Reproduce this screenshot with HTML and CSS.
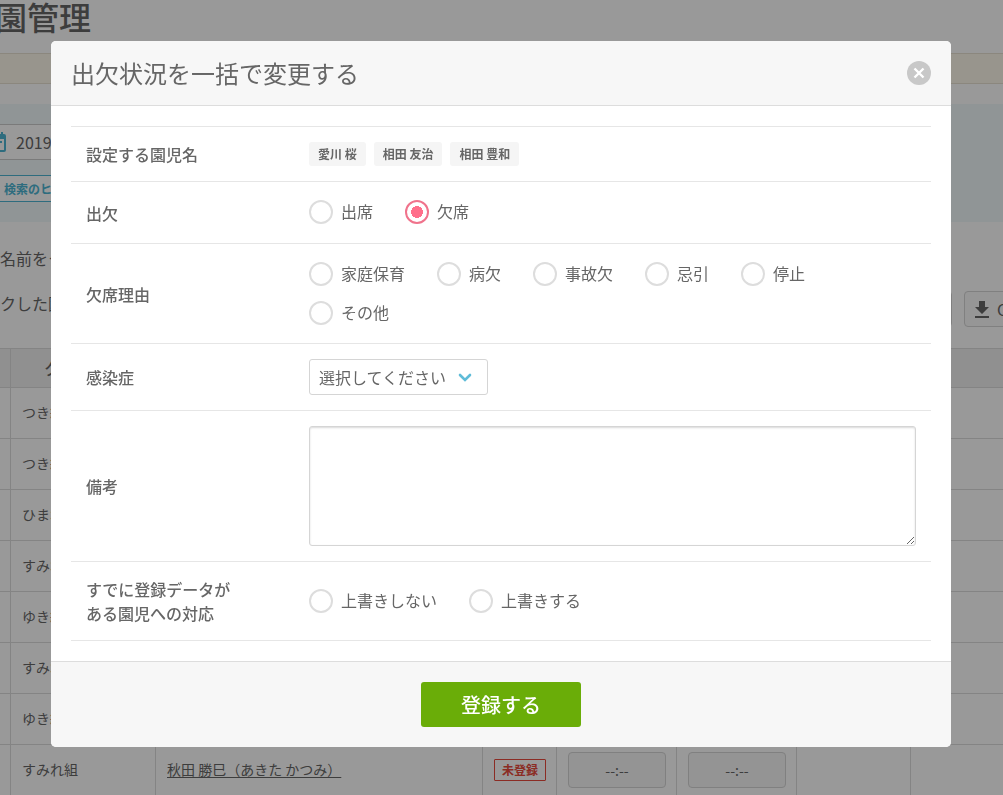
FILE: index.html
```html
<!DOCTYPE html>
<html lang="ja">
<head>
<meta charset="utf-8">
<meta name="viewport" content="width=device-width, initial-scale=1">
<title>出欠状況を一括で変更する</title>
<link rel="stylesheet" href="styles.css">
</head>
<body>
<main class="page">
  <h1 class="page-title">園管理</h1>
  <div class="notice"></div>
  <section class="search">
    <div class="date-field">
      <svg class="calendar" viewBox="0 0 18 20" aria-hidden="true"><path fill-rule="evenodd" d="M16 2h-1V0h-2v2H5V0H3v2H2a2 2 0 0 0-2 2v14a2 2 0 0 0 2 2h14a2 2 0 0 0 2-2V4a2 2 0 0 0-2-2zm0 16H2V7h14zM4 9h10v2H4z"/></svg>
      <span>2019</span>
    </div>
    <button class="hint" type="button">検索のヒント</button>
  </section>
  <p class="lead">名前をク</p>
  <div class="tools">
    <p class="tools-text">クした園児</p>
    <button class="tool" type="button" aria-label="操作"></button>
    <button class="tool tool-download" type="button">
      <svg class="download" viewBox="0 0 14 17" aria-hidden="true"><path d="M4 0h6v6h4l-7 7-7-7h4zM0 15h14v2H0z"/></svg>
      <span>CSV</span>
    </button>
  </div>
  <table class="list">
    <colgroup><col class="c-check"><col class="c-class"><col class="c-name"><col class="c-state"><col class="c-time"><col class="c-time"><col class="c-note"><col></colgroup>
    <thead><tr><th></th><th>クラス</th><th></th><th></th><th></th><th></th><th></th><th></th></tr></thead>
    <tbody>
      <tr><td></td><td>つき組</td><td></td><td></td><td></td><td></td><td></td><td></td></tr>
      <tr><td></td><td>つき組</td><td></td><td></td><td></td><td></td><td></td><td></td></tr>
      <tr><td></td><td>ひまわり組</td><td></td><td></td><td></td><td></td><td></td><td></td></tr>
      <tr><td></td><td>すみれ組</td><td></td><td></td><td></td><td></td><td></td><td></td></tr>
      <tr><td></td><td>ゆき組</td><td></td><td></td><td></td><td></td><td></td><td></td></tr>
      <tr><td></td><td>すみれ組</td><td></td><td></td><td></td><td></td><td></td><td></td></tr>
      <tr><td></td><td>ゆき組</td><td></td><td></td><td></td><td></td><td></td><td></td></tr>
      <tr><td></td><td>すみれ組</td><td><a class="child" href="#">秋田 勝巳（あきた かつみ）</a></td><td><span class="badge">未登録</span></td><td><button class="time" type="button">--:--</button></td><td><button class="time" type="button">--:--</button></td><td></td><td></td></tr>
    </tbody>
  </table>
</main>

<div class="overlay">
  <form class="modal" role="dialog" aria-modal="true" aria-labelledby="modal-title">
    <header class="modal-head">
      <h2 class="modal-title" id="modal-title">出欠状況を一括で変更する</h2>
      <button class="close" type="button" aria-label="閉じる">
        <svg viewBox="0 0 24 24" aria-hidden="true"><path d="M7.5 7.5l9 9M16.5 7.5l-9 9"/></svg>
      </button>
    </header>
    <div class="modal-body">
      <div class="rows">
        <div class="row">
          <div class="label">設定する園児名</div>
          <div class="tags"><span class="tag">愛川 桜</span><span class="tag">相田 友治</span><span class="tag">相田 豊和</span></div>
        </div>
        <div class="row" role="radiogroup" aria-labelledby="l-attend">
          <div class="label" id="l-attend">出欠</div>
          <div class="choices">
            <label class="choice"><input class="radio" type="radio" name="attend"><span class="choice-text">出席</span></label>
            <label class="choice"><input class="radio" type="radio" name="attend" checked><span class="choice-text">欠席</span></label>
          </div>
        </div>
        <div class="row" role="radiogroup" aria-labelledby="l-reason">
          <div class="label" id="l-reason">欠席理由</div>
          <div class="choices">
            <label class="choice"><input class="radio" type="radio" name="reason"><span class="choice-text">家庭保育</span></label>
            <label class="choice"><input class="radio" type="radio" name="reason"><span class="choice-text">病欠</span></label>
            <label class="choice"><input class="radio" type="radio" name="reason"><span class="choice-text">事故欠</span></label>
            <label class="choice"><input class="radio" type="radio" name="reason"><span class="choice-text">忌引</span></label>
            <label class="choice"><input class="radio" type="radio" name="reason"><span class="choice-text">停止</span></label>
            <label class="choice"><input class="radio" type="radio" name="reason"><span class="choice-text">その他</span></label>
          </div>
        </div>
        <div class="row">
          <label class="label" for="disease">感染症</label>
          <div class="select-wrap">
            <select class="select" id="disease"><option>選択してください</option></select>
            <svg class="chevron" viewBox="0 0 14 9" aria-hidden="true"><path d="M2 2l5 5 5-5"/></svg>
          </div>
        </div>
        <div class="row">
          <label class="label" for="memo">備考</label>
          <textarea class="memo" id="memo"></textarea>
        </div>
        <div class="row" role="radiogroup" aria-labelledby="l-over">
          <div class="label" id="l-over">すでに登録データが<br>ある園児への対応</div>
          <div class="choices">
            <label class="choice"><input class="radio" type="radio" name="over"><span class="choice-text">上書きしない</span></label>
            <label class="choice"><input class="radio" type="radio" name="over"><span class="choice-text">上書きする</span></label>
          </div>
        </div>
      </div>
    </div>
    <footer class="modal-foot"><button class="submit" type="button">登録する</button></footer>
  </form>
</div>
</body>
</html>
```

FILE: styles.css
```css
*, *::before, *::after { box-sizing: border-box; }
body {
  margin: 0;
  height: 100vh;
  overflow: hidden;
  background: #fff;
  color: #666;
  font: 16px/24px "Noto Sans CJK JP", sans-serif;
}
button, select, textarea { font: inherit; color: inherit; margin: 0; }
h1, h2, p { margin: 0; }

/* page behind the dialog */
.page { overflow: hidden; }
.page-title {
  margin-left: -5px;
  height: 53px;
  font-size: 32px;
  line-height: 32px;
  font-weight: 500;
}
.notice {
  height: 31px;
  background: #fdf9ec;
  border: solid #e8e2d2;
  border-width: 1px 0;
}
.search {
  margin-top: 20px;
  height: 118px;
  padding-top: 20px;
  background: #f0f8fb;
}
.date-field {
  display: flex;
  align-items: center;
  gap: 10px;
  width: 240px;
  height: 36px;
  margin-left: -13px;
  background: #fff;
  border: 1px solid #ccc;
}
.calendar { width: 18px; height: 20px; fill: #4db5d3; }
.hint {
  display: block;
  height: 27px;
  margin: 15px 0 0 -6px;
  padding: 0 9px;
  background: #fff;
  border: 1px solid #4db5d3;
  color: #4db5d3;
  font-size: 12px;
  line-height: 24px;
  font-weight: 700;
}
.lead { margin-top: 24px; }
.tools {
  display: flex;
  gap: 12px;
  margin-top: 21px;
  height: 36px;
}
.tools-text { flex: 1; }
.tool {
  width: 120px;
  background: #fafafa;
  border: 1px solid #d5d5d5;
  border-radius: 4px;
}
.tool-download {
  display: flex;
  align-items: center;
  gap: 8px;
  margin-right: -81px;
  padding: 0 10px;
}
.download { width: 14px; height: 17px; fill: #666; }
.list {
  width: 100%;
  margin-top: 21px;
  table-layout: fixed;
  border-collapse: separate;
  border-spacing: 0;
  border-top: 1px solid #ddd;
  font-size: 14px;
}
.list th, .list td {
  height: 51px;
  padding: 0 11px 2px;
  border: solid #ddd;
  border-width: 0 1px 1px 0;
  text-align: left;
  white-space: nowrap;
  overflow: hidden;
}
.list td:nth-child(n+4) { padding-bottom: 0; }
.list th {
  height: 39px;
  padding: 0 33px;
  background: #f0f0f0;
  font-size: 16px;
  font-weight: 500;
}
.list th:first-child, .list td:first-child { padding: 0; }
.list th:last-child, .list td:last-child { border-right: 0; }
.c-check { width: 11px; }
.c-class { width: 145px; }
.c-name { width: 327px; }
.c-state { width: 74px; }
.c-time { width: 120px; }
.c-note { width: 114px; }
.child { color: inherit; text-underline-offset: 2px; }
.badge {
  display: block;
  width: 52px;
  height: 22px;
  border: 1px solid #e84a3c;
  border-radius: 1px;
  color: #e84a3c;
  font-size: 12px;
  line-height: 20px;
  font-weight: 700;
  text-align: center;
}
.time {
  display: block;
  width: 98px;
  height: 36px;
  background: #f7f7f7;
  border: 1px solid #d5d5d5;
  border-radius: 4px;
}

/* dialog */
.overlay {
  position: fixed;
  inset: 0;
  display: flex;
  justify-content: center;
  align-items: flex-start;
  padding: 41px 1px 0 0;
  background: rgba(0, 0, 0, .4);
}
.modal {
  width: 900px;
  max-width: 96%;
  background: #fff;
  border-radius: 5px;
  overflow: hidden;
}
.modal-head {
  display: flex;
  align-items: center;
  justify-content: space-between;
  padding: 14px 20px;
  background: #f7f7f7;
  border-bottom: 1px solid #ddd;
}
.modal-title { font-size: 24px; line-height: 36px; font-weight: 400; }
.close {
  width: 24px;
  height: 24px;
  padding: 0;
  background: #c8c8c8;
  border: 0;
  border-radius: 50%;
}
.close svg { display: block; stroke: #fff; stroke-width: 2.4; fill: none; }
.modal-body { padding: 20px; }
.rows { border-top: 1px solid #e6e6e6; }
.row {
  display: grid;
  grid-template-columns: 223px 1fr;
  align-items: center;
  padding: 15px;
  border-bottom: 1px solid #e6e6e6;
}
.label { font-weight: 500; }
.tags { display: flex; gap: 8px; }
.tag {
  padding: 0 9px;
  background: #f5f5f5;
  border-radius: 3px;
  font-size: 12px;
  font-weight: 700;
}
.choices {
  display: flex;
  flex-wrap: wrap;
  align-content: flex-start;
  gap: 15px 32px;
  min-height: 31px;
  padding: 3px 0;
}
.choice { display: flex; align-items: center; gap: 8px; height: 24px; }
.choice-text { line-height: 22px; padding-bottom: 2px; }
.radio {
  appearance: none;
  width: 24px;
  height: 24px;
  margin: 0;
  background: #fff;
  border: 2px solid #ddd;
  border-radius: 50%;
}
.radio:checked {
  border-color: #f0738c;
  background: radial-gradient(circle, #ff6f8b 6px, #fff 6px);
}
.select-wrap { position: relative; justify-self: start; }
.select {
  display: block;
  appearance: none;
  height: 36px;
  padding: 0 39px 0 9px;
  background: #fff;
  border: 1px solid #d5d5d5;
  border-radius: 3px;
}
.chevron {
  position: absolute;
  right: 16px;
  top: 14px;
  width: 14px;
  height: 9px;
  fill: none;
  stroke: #5fbcd8;
  stroke-width: 2.6;
  stroke-linecap: round;
  pointer-events: none;
}
.memo {
  display: block;
  width: 100%;
  height: 120px;
  padding: 8px;
  background: #fff;
  border: 1px solid #d5d5d5;
  border-radius: 3px;
  box-shadow: inset 0 1px 2px rgba(0, 0, 0, .15);
  resize: vertical;
}
.modal-foot {
  display: flex;
  justify-content: center;
  padding: 20px;
  background: #f7f7f7;
  border-top: 1px solid #ddd;
}
.submit {
  width: 160px;
  height: 45px;
  padding: 0;
  background: #6aad08;
  border: 0;
  border-radius: 3px;
  color: #fff;
  font-size: 20px;
  font-weight: 500;
}
```
